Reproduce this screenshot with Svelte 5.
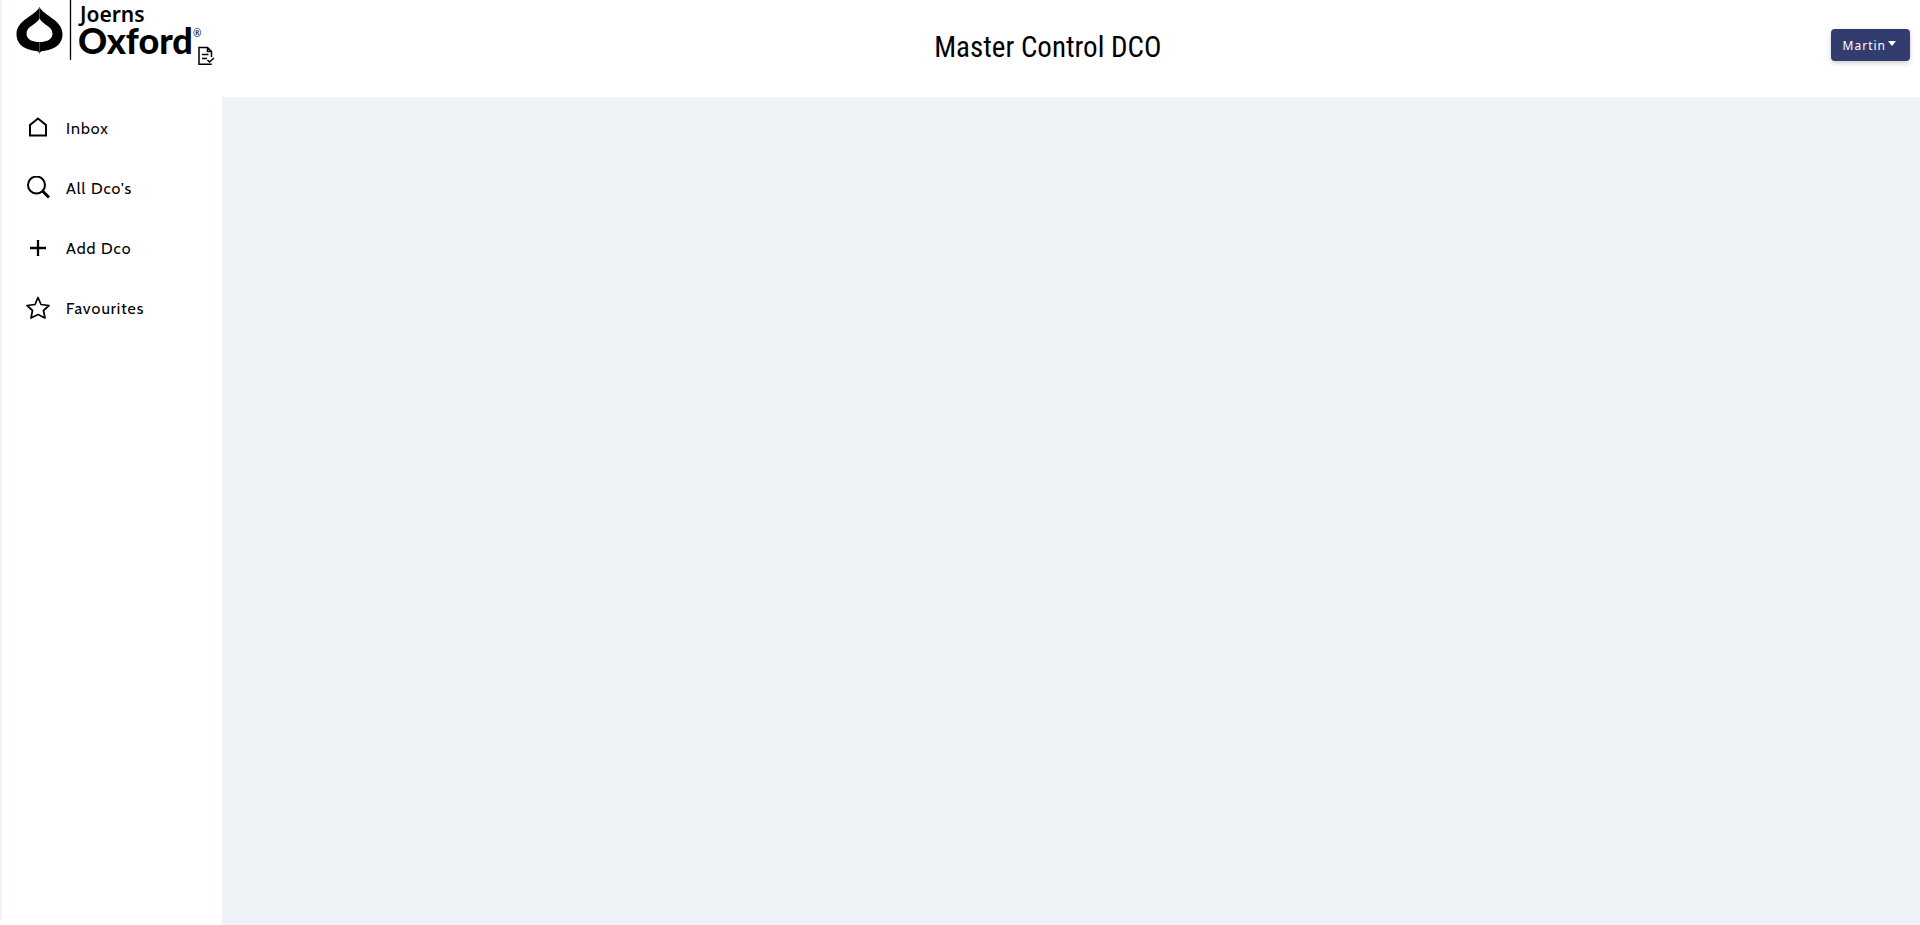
<script>
  const items = [
    { label: 'Inbox', icon: 'home' },
    { label: "All Dco's", icon: 'search' },
    { label: 'Add Dco', icon: 'plus' },
    { label: 'Favourites', icon: 'star' },
  ];
</script>

<div class="shell">
  <div class="edge"></div>
  <div class="app">
    <header>
      <a class="brand" href="#home" aria-label="Joerns Oxford">
        <svg class="logo" viewBox="0 0 187 66">
          <path
            fill-rule="evenodd"
            d="M25.500 7C30 16 48.500 20 48.500 34C48.500 46 38 50 29 51C27 51 26 52 25.500 54C25 52 24 51 22 51C13 50 2.500 46 2.500 34C2.500 20 21 16 25.500 7ZM25.500 18.500C22 25 12.500 26 12.500 33.500C12.500 40 19 42 25.500 42C32 42 38.500 40 38.500 33.500C38.500 26 29 25 25.500 18.500Z"
          />
          <path d="M25.500 8V19M25.500 42V53" stroke="#999" stroke-width=".5" />
          <path d="M56.500 0V60" stroke="#000" stroke-width="1.300" />
          <text class="joerns" x="66" y="22">Joerns</text>
          <text class="oxford" x="64" y="54">Oxford</text>
          <text class="mark" x="179" y="37">®</text>
        </svg>
        <svg class="doc" viewBox="0 0 18 20">
          <path d="M14 17.500V18.200H2V1.500H10.500L14.500 5.500V11M10.500 1.500V5.500H14.500M5 8.500H11.500M5 12.500H10M10.500 14L12.500 16L17 12" fill="none" stroke="#000" stroke-width="1.500" />
        </svg>
      </a>
      <h1>Master Control DCO</h1>
      <button class="user" type="button">Martin<span class="caret"></span></button>
    </header>
    <div class="body">
      <nav>
        {#each items as item}
          <a href="#{item.icon}">
            <svg viewBox="0 0 24 24" fill="none" stroke="#000" stroke-width="2">
              {#if item.icon === 'home'}
                <path d="M4 19.500V9L12 2.500L20 9V19.500Z" />
              {:else if item.icon === 'search'}
                <circle cx="10.500" cy="9" r="8.500" />
                <path d="M16.500 15L23 21.500" stroke-width="3" />
              {:else if item.icon === 'plus'}
                <path d="M12 4V20M4 12H20" stroke-width="2.300" />
              {:else}
                <path d="M12 1.500L15 8.500L23 9.500L17.500 14.500L19 22L12 18.500L5 22L6.500 14.500L1 9.500L9 8.500Z" stroke-width="1.700" stroke-linejoin="round" />
              {/if}
            </svg>
            <span>{item.label}</span>
          </a>
        {/each}
      </nav>
      <main></main>
    </div>
  </div>
</div>

<style>
  :global(body) {
    margin: 0;
    background: #fff;
  }
  .shell {
    display: flex;
    min-height: 100vh;
    color: #000;
  }
  .edge {
    width: 2px;
    margin-bottom: 6px;
    background: #eff3f8;
  }
  .app {
    flex: 1;
    display: flex;
    flex-direction: column;
  }
  header {
    display: flex;
    height: 97px;
    padding-right: 10px;
    box-sizing: border-box;
  }
  .brand {
    display: flex;
    align-items: flex-start;
    width: 251px;
    padding-left: 12px;
    color: #000;
  }
  .logo {
    width: 187px;
    height: 66px;
    flex: none;
    overflow: visible;
  }
  .joerns {
    font: 600 21px "Noto Sans", "Open Sans", sans-serif;
  }
  .oxford {
    font: 900 36px Lato, "Open Sans", sans-serif;
  }
  .mark {
    font: 10px "Noto Sans", sans-serif;
  }
  .doc {
    width: 18px;
    height: 20px;
    margin: 46px 0 0 -4px;
    flex: none;
  }
  h1 {
    flex: 1;
    margin: 0;
    padding-top: 28px;
    text-align: center;
    font: 400 29px/38px "Roboto Condensed", "Liberation Sans Narrow", Roboto, sans-serif;
  }
  .user {
    display: flex;
    align-items: center;
    gap: 2px;
    height: 32px;
    margin-top: 29px;
    padding: 0 12px;
    border: 0;
    border-radius: 4px;
    background: #333c6f;
    box-shadow: 0 2px 5px rgba(0, 0, 0, 0.2);
    color: #fff;
    font: 12px "Noto Sans", sans-serif;
    letter-spacing: 1px;
  }
  .caret {
    margin: 0 2px 4px 0;
    border: 4px solid transparent;
    border-top: 5px solid #fff;
    border-bottom: 0;
  }
  .body {
    flex: 1;
    display: flex;
  }
  nav {
    width: 220px;
    flex: none;
    padding-top: 1px;
    box-sizing: border-box;
  }
  nav a {
    display: flex;
    align-items: center;
    gap: 16px;
    height: 60px;
    padding-left: 24px;
    color: #000;
    text-decoration: none;
    font: 16px Cabin, "Noto Sans", sans-serif;
    letter-spacing: 1px;
  }
  nav svg {
    width: 24px;
    height: 24px;
  }
  main {
    flex: 1;
    background: #eff3f8;
  }
</style>
